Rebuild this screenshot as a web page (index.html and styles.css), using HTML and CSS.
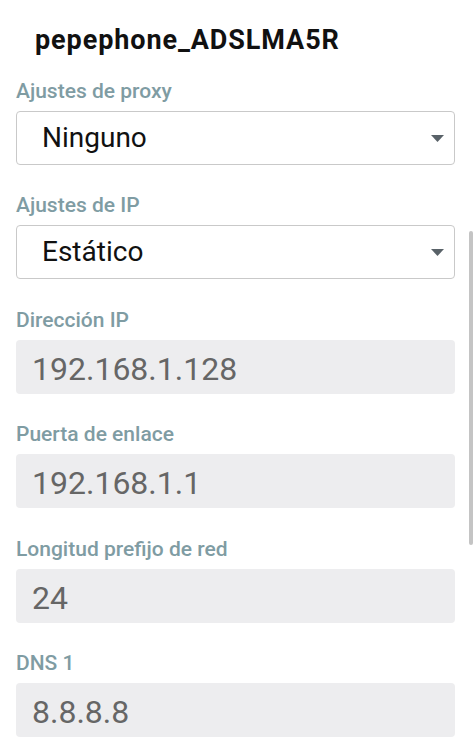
FILE: index.html
```html
<!DOCTYPE html>
<html lang="es">
<head>
<meta charset="UTF-8">
<meta name="viewport" content="width=device-width, initial-scale=1.0">
<title>pepephone_ADSLMA5R</title>
<link rel="stylesheet" href="styles.css">
</head>
<body>

<div class="screen">
    <h1 class="network-name">pepephone_ADSLMA5R</h1>

    <div class="field">
        <label class="field-label">Ajustes de proxy</label>
        <div class="select">
            <span>Ninguno</span>
            <svg class="arrow" width="13" height="7" viewBox="0 0 13 7"><path d="M0 0H13L6.5 7Z"/></svg>
        </div>
    </div>

    <div class="field">
        <label class="field-label">Ajustes de IP</label>
        <div class="select">
            <span>Estático</span>
            <svg class="arrow" width="13" height="7" viewBox="0 0 13 7"><path d="M0 0H13L6.5 7Z"/></svg>
        </div>
    </div>

    <div class="field">
        <label class="field-label">Dirección IP</label>
        <div class="input">192.168.1.128</div>
    </div>

    <div class="field">
        <label class="field-label">Puerta de enlace</label>
        <div class="input">192.168.1.1</div>
    </div>

    <div class="field">
        <label class="field-label">Longitud prefijo de red</label>
        <div class="input">24</div>
    </div>

    <div class="field">
        <label class="field-label">DNS 1</label>
        <div class="input">8.8.8.8</div>
    </div>

    <div class="scrollbar"></div> <!-- barra de desplazamiento del diálogo -->
</div>

</body>
</html>
```

FILE: styles.css
```css
body {
    font-family: Roboto, "Noto Sans", sans-serif;
    margin: 0;
    padding: 0;
    background-color: #fff;
    overflow: hidden;
}
.screen {
    position: relative;
    height: 753px;
    padding: 0 19px 0 16px;
}
.network-name {
    margin: 0 0 23px 19px;
    padding-top: 24px;
    font-size: 27px;
    line-height: 32px;
    font-weight: 700;
    letter-spacing: 0.9px;
    color: #111;
}
.field {
    margin-bottom: 28.4px;
}
.field-label {
    display: block;
    margin-bottom: 8px;
    font-size: 21px;
    line-height: 24px;
    font-weight: 500;
    color: #7f9ca3;
}
.select {
    display: flex;
    align-items: center;
    height: 52px;
    padding: 0 10px 0 25px;
    border: 1px solid #c9c9c9;
    border-radius: 4px;
    font-size: 28px;
    line-height: 52px;
    color: #111;
}
.arrow {
    margin-left: auto;
    fill: #596268;
}
.input {
    height: 50px;
    padding: 4px 0 0 16px;
    border-radius: 4px;
    background-color: #ededef;
    font-size: 32px;
    line-height: 50px;
    color: #666;
}
.scrollbar {
    position: absolute;
    top: 231px;
    left: 469px;
    width: 4px;
    height: 314px;
    border-radius: 2px;
    background-color: #c4c4c4;
}
```
